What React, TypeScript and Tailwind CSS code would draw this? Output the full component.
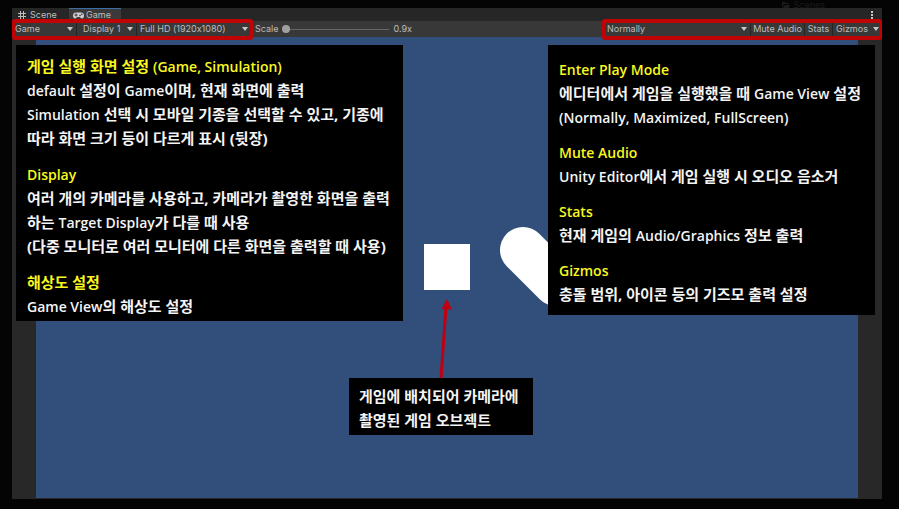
import type { ReactNode } from "react";

const UI_FONT = "font-['Inter','Liberation_Sans',sans-serif] [font-feature-settings:'calt'_0]";
const NOTE_FONT = "font-['Open_Sans','Noto_Sans_CJK_KR',sans-serif]";

type Section = { title: string; lines: string[] };

const leftSections: Section[] = [
  {
    title: "게임 실행 화면 설정 (Game, Simulation)",
    lines: [
      "default 설정이 Game이며, 현재 화면에 출력",
      "Simulation 선택 시 모바일 기종을 선택할 수 있고, 기종에",
      "따라 화면 크기 등이 다르게 표시 (뒷장)",
    ],
  },
  {
    title: "Display",
    lines: [
      "여러 개의 카메라를 사용하고, 카메라가 촬영한 화면을 출력",
      "하는 Target Display가 다를 때 사용",
      "(다중 모니터로 여러 모니터에 다른 화면을 출력할 때 사용)",
    ],
  },
  { title: "해상도 설정", lines: ["Game View의 해상도 설정"] },
];

const rightSections: Section[] = [
  {
    title: "Enter Play Mode",
    lines: [
      "에디터에서 게임을 실행했을 때 Game View 설정",
      "(Normally, Maximized, FullScreen)",
    ],
  },
  { title: "Mute Audio", lines: ["Unity Editor에서 게임 실행 시 오디오 음소거"] },
  { title: "Stats", lines: ["현재 게임의 Audio/Graphics 정보 출력"] },
  { title: "Gizmos", lines: ["충돌 범위, 아이콘 등의 기즈모 출력 설정"] },
];

// Latin runs are set a step smaller and lighter so that they balance with the Hangul.
function Mixed({ text }: { text: string }) {
  return (
    <>
      {text.split(/(\(?[A-Za-z][A-Za-z/,) (]*[A-Za-z),])/).map((part, i) =>
        i % 2 === 1 ? (
          <span key={i} className="text-[14px] font-semibold">
            {part}
          </span>
        ) : (
          part
        ),
      )}
    </>
  );
}

function Sections({ items }: { items: Section[] }) {
  return (
    <>
      {items.map((s) => (
        <section key={s.title}>
          <h2 className="h-6 text-[#f8f820]">
            <Mixed text={s.title} />
          </h2>
          {s.lines.map((l) => (
            <p key={l} className="h-6">
              <Mixed text={l} />
            </p>
          ))}
        </section>
      ))}
    </>
  );
}

function Caret({ className = "" }: { className?: string }) {
  return (
    <svg viewBox="0 0 6 4" className={`h-1 w-1.5 fill-[#c8c8c8] ${className}`} aria-hidden="true">
      <path d="M0 0h6L3 4z" />
    </svg>
  );
}

function ToolbarSelect({ label, value, className }: { label: string; value: string; className: string }) {
  return (
    <div className={`relative h-full border-r border-[#252525] ${className}`}>
      <select
        aria-label={label}
        className="h-full w-full appearance-none bg-transparent pl-[3px] text-[#bdbdbd] outline-none"
      >
        <option>{value}</option>
      </select>
      <Caret className="pointer-events-none absolute top-1.5 right-[3px]" />
    </div>
  );
}

function Highlight({ children, className = "" }: { children: ReactNode; className?: string }) {
  return (
    <div className={`relative flex h-full ${className}`}>
      {children}
      <div className="pointer-events-none absolute inset-x-0 -top-0.5 -bottom-[3px] z-10 rounded-[3px] border-x-[3px] border-y-4 border-[#c00404]" />
    </div>
  );
}

function FolderIcon() {
  return (
    <svg viewBox="0 0 8 6" className="h-1.5 w-2 fill-current" aria-hidden="true">
      <path d="M0 0h3l1 1h3v1H2L0 6zM2.500 3H8L7 6H1z" />
    </svg>
  );
}

export default function App() {
  return (
    <div className={`relative flex h-screen flex-col bg-[#040405] pt-2 pr-[17px] pb-2.5 pl-3 text-[9px] ${UI_FONT}`}>
      <div className="absolute top-0 right-[74px] flex h-2.5 items-center gap-1 text-[#1b1b1c]">
        <FolderIcon />
        <span>Scenes</span>
      </div>

      <main className="relative flex min-h-0 flex-1 flex-col bg-[#282828] text-[#bdbdbd]">
        <div className="flex h-[13px] shrink-0 items-stretch bg-[#262626]" role="tablist">
          <button role="tab" aria-selected="false" className="flex w-[57px] items-center gap-1 pl-1.5">
            <svg viewBox="0 0 8 8" className="h-2 w-2 stroke-current" fill="none" aria-hidden="true">
              <path d="M2.500 0v8M5.500 0v8M0 2.500h8M0 5.500h8" />
            </svg>
            Scene
          </button>
          <button
            role="tab"
            aria-selected="true"
            className="flex w-[52px] items-center gap-0.5 border-t border-[#3a6ea5] bg-[#3a3a3a] pl-1"
          >
            <svg viewBox="0 0 11 7" className="h-[7px] w-[11px] shrink-0" aria-hidden="true">
              <path
                className="fill-[#d0d0d0]"
                d="M3 .5h5A3 3 0 0 1 11 3.500C11 5.500 10 6.500 9 6.500S7.500 5.500 7 5H4C3.500 5.500 3 6.500 2 6.500S0 5.500 0 3.500A3 3 0 0 1 3 .5z"
              />
              <path className="stroke-[#3a3a3a]" d="M1.500 3h3M3 1.500v3" />
              <circle className="fill-[#3a3a3a]" cx="7" cy="3.500" r=".8" />
              <circle className="fill-[#3a3a3a]" cx="8.800" cy="2.400" r=".8" />
            </svg>
            Game
          </button>
          <button aria-label="Tab options" className="ml-auto flex w-5 items-center justify-center">
            <svg viewBox="0 0 2 8" className="h-2 w-0.5 fill-[#c8c8c8]" aria-hidden="true">
              <path d="M0 0h2v2H0zM0 3h2v2H0zM0 6h2v2H0z" />
            </svg>
          </button>
        </div>

        <div className="flex h-4 shrink-0 items-center bg-[#383838]">
          <Highlight className="w-[241px] shrink-0">
            <ToolbarSelect label="View" value="Game" className="w-[65px]" />
            <ToolbarSelect label="Display" value="Display 1" className="w-[60px] pl-[3px]" />
            <ToolbarSelect label="Resolution" value="Full HD (1920x1080)" className="w-[115px]" />
          </Highlight>
          <label htmlFor="scale" className="ml-0.5">
            Scale
          </label>
          <input
            id="scale"
            type="range"
            min={0}
            max={100}
            defaultValue={0}
            className="ml-1 h-2 w-[107px] appearance-none bg-[linear-gradient(#666,#666)] bg-[length:100%_1px] bg-center bg-no-repeat [&::-webkit-slider-thumb]:h-2 [&::-webkit-slider-thumb]:w-2 [&::-webkit-slider-thumb]:appearance-none [&::-webkit-slider-thumb]:rounded-full [&::-webkit-slider-thumb]:bg-[#a0a0a0]"
          />
          <output htmlFor="scale" className="ml-1">
            0.9x
          </output>
          <Highlight className="ml-auto w-[280px] shrink-0">
            <ToolbarSelect label="Enter play mode" value="Normally" className="w-[149px] pl-0.5" />
            <button className="w-[54px] border-r border-[#252525]">Mute Audio</button>
            <button className="w-[28px] border-r border-[#252525]">Stats</button>
            <button className="flex flex-1 items-center justify-between pr-[3px] pl-[3px]">
              Gizmos
              <Caret />
            </button>
          </Highlight>
        </div>

        <div className="relative min-h-0 flex-1 px-6 pb-px">
          <div className="relative h-full bg-[#324e7b]">
            <svg viewBox="0 0 822 461" className="h-full w-full" aria-hidden="true">
              <rect x="388" y="207" width="46" height="46" fill="#fff" />
              <path d="M487 213L520 246" stroke="#fff" strokeWidth="46" strokeLinecap="round" />
              <path d="M405 341L410 270" stroke="#c00010" strokeWidth="3" />
              <path d="M411 262L405.500 272L416 272.500z" fill="#c00010" />
            </svg>
            <div
              className={`absolute top-[341px] left-[313px] w-46 bg-black pt-1.5 pb-[3px] pl-2.5 text-[15px] leading-6 font-bold whitespace-nowrap text-[#f4f4f4] ${NOTE_FONT}`}
            >
              <p>게임에 배치되어 카메라에</p>
              <p>촬영된 게임 오브젝트</p>
            </div>
          </div>

          <div
            className={`absolute inset-x-0 top-2 flex items-start justify-between pr-[7px] pl-1 text-[15px] leading-6 font-bold whitespace-nowrap text-[#f4f4f4] ${NOTE_FONT}`}
          >
            <article className="flex w-[387px] flex-col gap-3 bg-black pt-[9px] pb-[3px] pl-[11px]">
              <Sections items={leftSections} />
            </article>
            <article className="flex w-[327px] flex-col gap-[11px] bg-black pt-3 pb-[9px] pl-[11px]">
              <Sections items={rightSections} />
            </article>
          </div>
        </div>
      </main>
    </div>
  );
}
